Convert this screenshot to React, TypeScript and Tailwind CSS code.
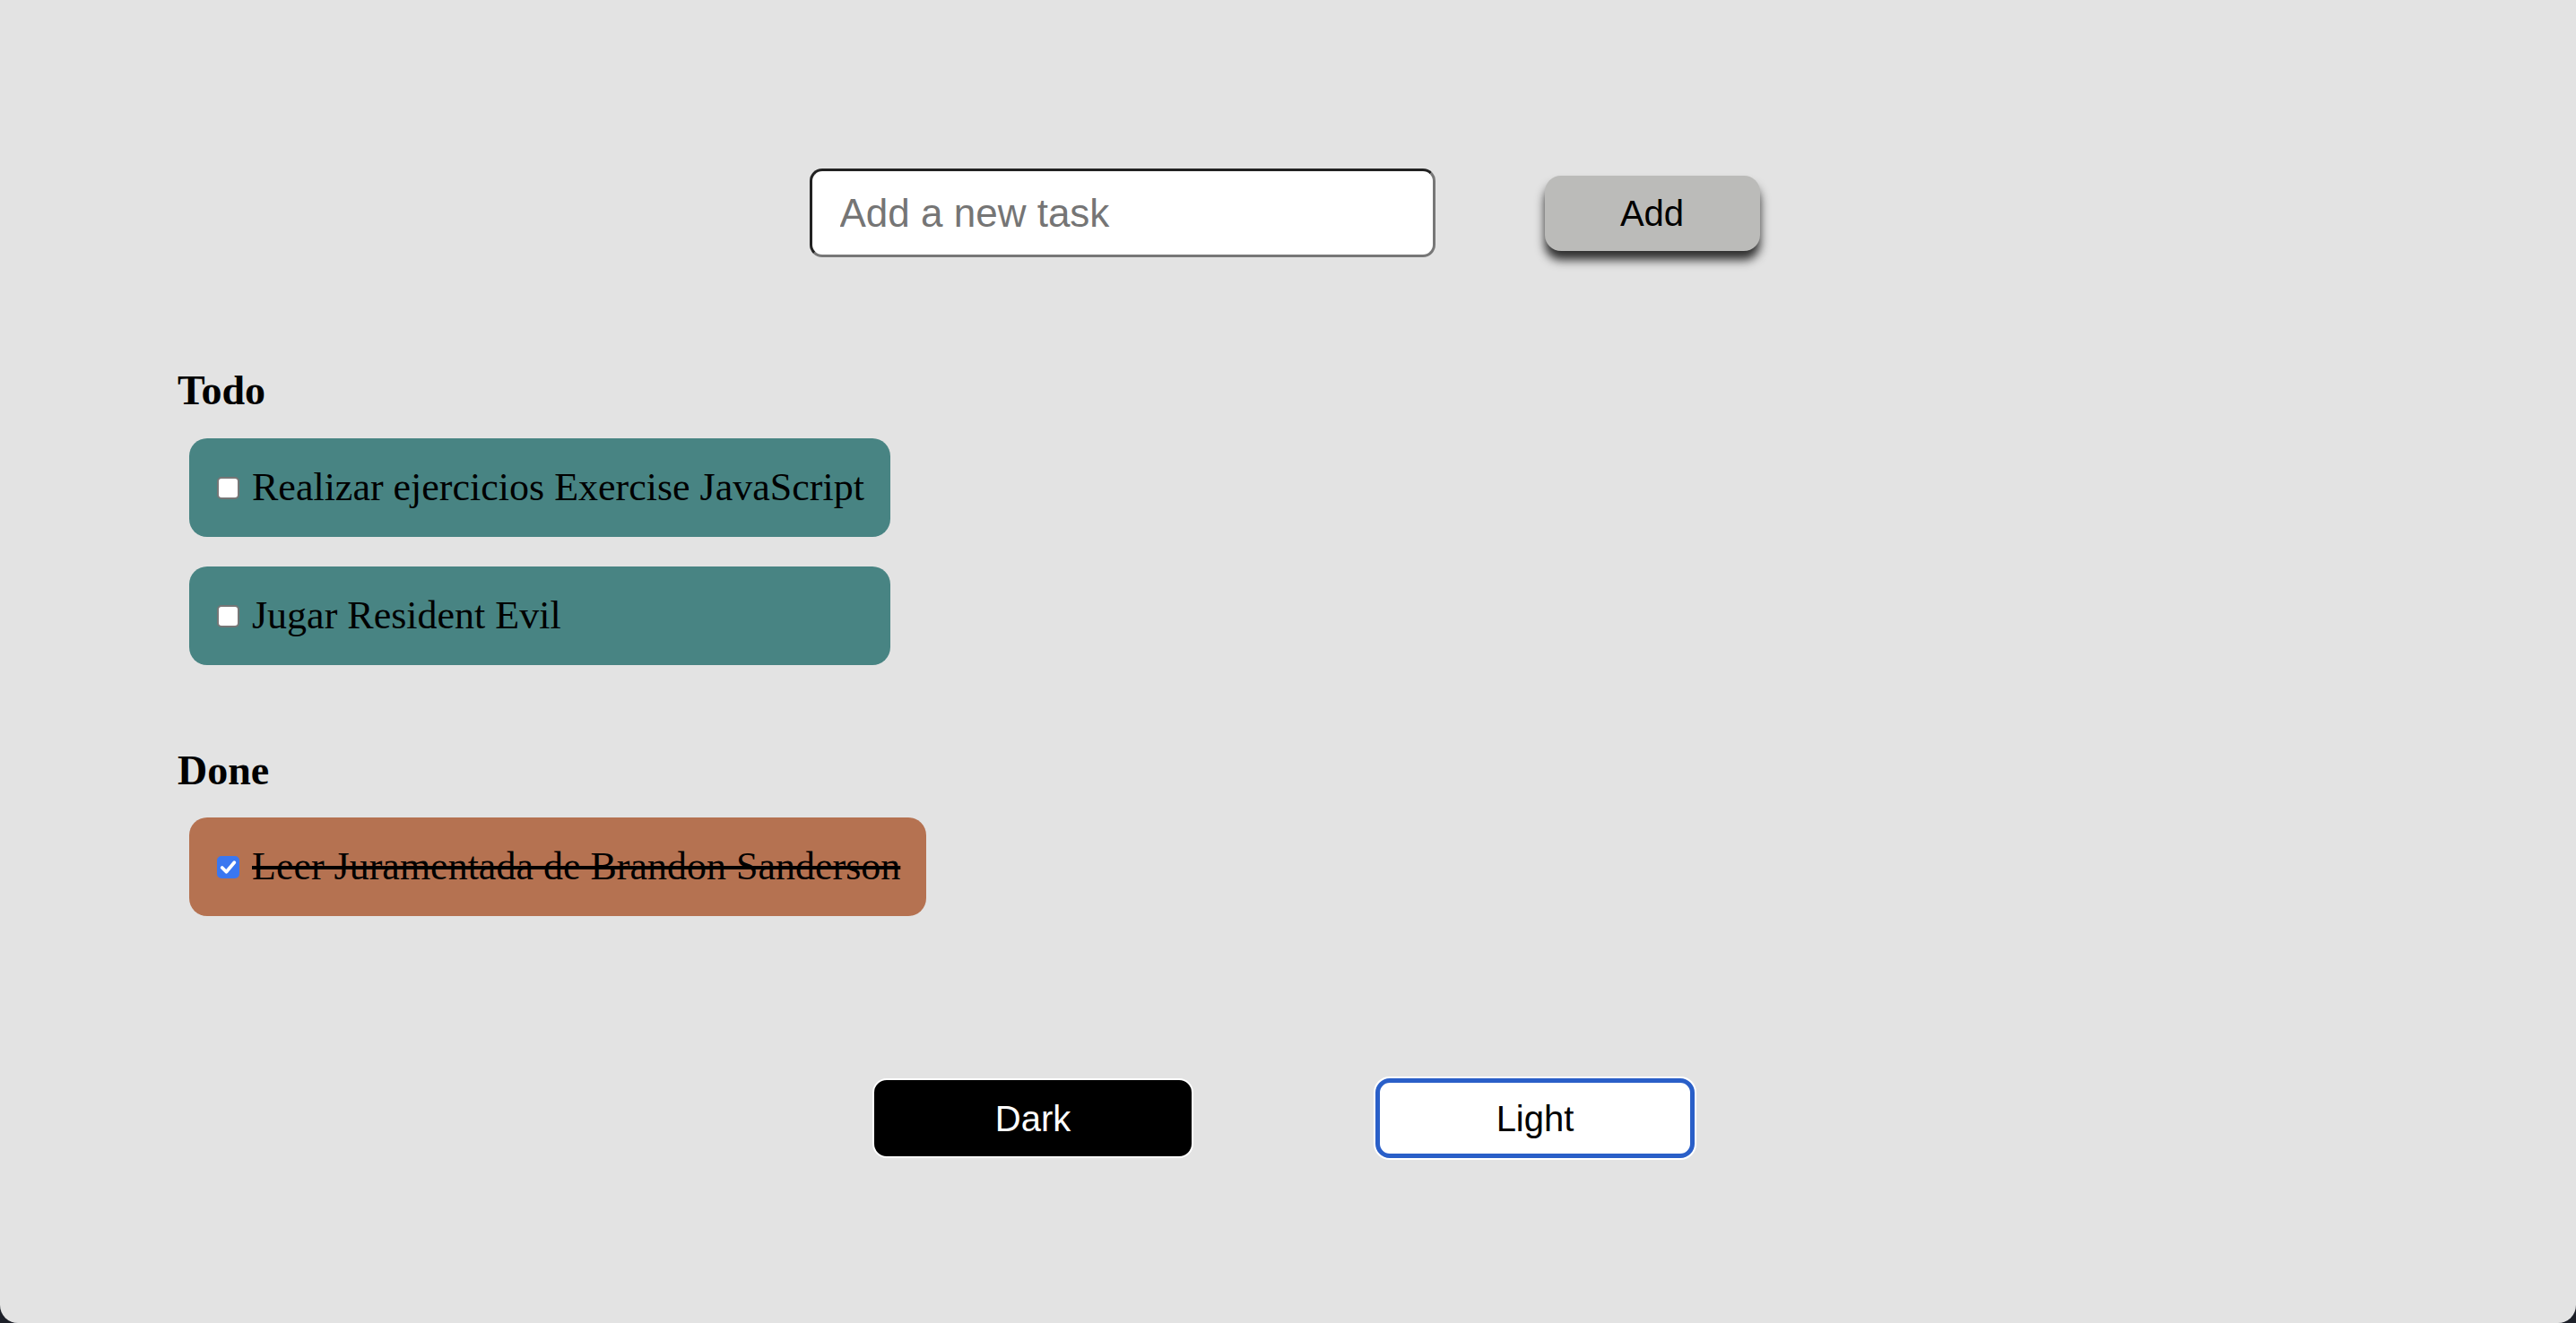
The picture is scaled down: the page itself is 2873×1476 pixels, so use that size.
import { useState } from "react";

type Task = { id: number; text: string; done: boolean };

const initial: Task[] = [
  { id: 1, text: "Realizar ejercicios Exercise JavaScript", done: false },
  { id: 2, text: "Jugar Resident Evil", done: false },
  { id: 3, text: "Leer Juramentada de Brandon Sanderson", done: true },
];

function TaskItem({ task, onToggle }: { task: Task; onToggle: () => void }) {
  return (
    <li
      className={`flex items-center gap-[14px] rounded-[20px] py-[30px] pl-[31px] pr-[29px] ${
        task.done ? "bg-[#b57251]" : "bg-[#488483]"
      }`}
    >
      <label className="relative flex h-[25px] w-[25px] shrink-0">
        <input
          type="checkbox"
          checked={task.done}
          onChange={onToggle}
          className="peer m-0 h-[25px] w-[25px] appearance-none rounded-[5px] border-2 border-[#767676] bg-white checked:border-[#3a77f0] checked:bg-[#3a77f0]"
        />
        <svg
          viewBox="0 0 24 24"
          className="pointer-events-none absolute inset-0 hidden h-[25px] w-[25px] peer-checked:block"
        >
          <path d="M5.5 12.5l4.5 4.5 8.5-10" fill="none" stroke="white" strokeWidth="3.6" strokeLinecap="round" strokeLinejoin="round" />
        </svg>
      </label>
      <span className={`whitespace-nowrap text-[44px] leading-[50px] text-black ${task.done ? "line-through" : ""}`}>
        {task.text}
      </span>
    </li>
  );
}

export default function App() {
  const [tasks, setTasks] = useState<Task[]>(initial);
  const [draft, setDraft] = useState("");

  const toggle = (id: number) =>
    setTasks((ts) => ts.map((t) => (t.id === id ? { ...t, done: !t.done } : t)));

  const add = () => {
    if (!draft.trim()) return;
    setTasks((ts) => [...ts, { id: Date.now(), text: draft.trim(), done: false }]);
    setDraft("");
  };

  const todo = tasks.filter((t) => !t.done);
  const done = tasks.filter((t) => t.done);

  return (
    <div className="min-h-screen bg-[#1d2029]">
      <div className="flex h-screen flex-col rounded-b-[20px] bg-[#e3e3e3] pt-[188px] font-['Liberation_Serif',serif]">
        {/* new task form */}
        <div className="flex items-center justify-center gap-[122px] pr-[8px]">
          <input
            value={draft}
            onChange={(e) => setDraft(e.target.value)}
            placeholder="Add a new task"
            className="h-[99px] w-[698px] rounded-[14px] border-[3px] border-b-[#777] border-l-[#222] border-r-[#777] border-t-[#222] bg-white pl-[31px] font-['Liberation_Sans',sans-serif] text-[44px] text-black outline-none placeholder:text-[#757575]"
          />
          <button
            onClick={add}
            className="h-[84px] w-[240px] rounded-[18px] bg-[#bbbbb9] font-['Liberation_Sans',sans-serif] text-[40px] text-black shadow-[0_10px_11px_rgba(0,0,0,0.8)]"
          >
            Add
          </button>
        </div>

        <div className="mt-[124px] pl-[198px]">
          <h3 className="text-[46px] font-bold leading-[50px] text-black">Todo</h3>
          <ul className="ml-[13px] mt-[28px] flex w-fit flex-col gap-[33px]">
            {todo.map((t) => (
              <TaskItem key={t.id} task={t} onToggle={() => toggle(t.id)} />
            ))}
          </ul>

          <h3 className="mt-[93px] text-[46px] font-bold leading-[50px] text-black">Done</h3>
          <ul className="ml-[13px] mt-[27px] flex w-fit flex-col gap-[33px]">
            {done.map((t) => (
              <TaskItem key={t.id} task={t} onToggle={() => toggle(t.id)} />
            ))}
          </ul>
        </div>

        {/* theme switch */}
        <div className="mt-[181px] flex justify-center gap-[203px] pr-[10px] font-['Liberation_Sans',sans-serif] text-[40px]">
          <button className="h-[89px] w-[358px] rounded-[16px] border-2 border-white bg-black text-white">Dark</button>
          <button className="h-[89px] w-[356px] rounded-[16px] border-[5px] border-[#2a5fc8] bg-white text-black ring-2 ring-white">
            Light
          </button>
        </div>
      </div>
    </div>
  );
}
